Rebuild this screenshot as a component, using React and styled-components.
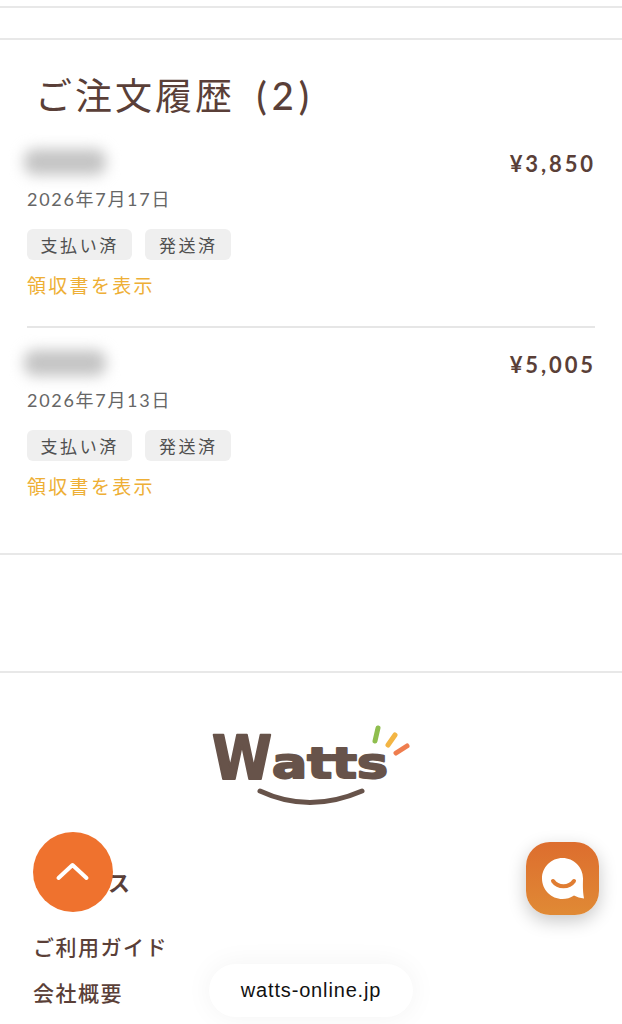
import React from "react";
import styled, { createGlobalStyle } from "styled-components";

const GlobalStyle = createGlobalStyle`
  html, body {
    margin: 0;
    padding: 0;
    background: #fff;
  }
  * {
    box-sizing: border-box;
  }
`;

const Page = styled.div`
  position: relative;
  width: 622px;
  height: 1024px;
  overflow: hidden;
  background: #fff;
  color: #5a3f38;
  font-family: "Lato", "Noto Sans CJK JP", sans-serif;
`;

const TopStrip = styled.div`
  height: 8px;
  border-bottom: 2px solid #e8e8e8;
`;

const OrderSection = styled.section`
  margin-top: 30px;
  height: 517px;
  padding: 0 27px;
  border-top: 2px solid #e8e8e8;
  border-bottom: 2px solid #e8e8e8;
`;

const Title = styled.h2`
  margin: 30px 0 0 8px;
  height: 50px;
  font-size: 37px;
  line-height: 50px;
  font-weight: 400;
  letter-spacing: 3px;
  word-spacing: 9px;
  white-space: nowrap;
`;

const TitleCount = styled.span`
  font-weight: 500;
  font-size: 38px;
  letter-spacing: 5px;
`;

const OrderList = styled.div`
  display: flex;
  flex-direction: column;
  gap: 15px;
  margin-top: 22px;
`;

const Order = styled.div`
  height: 186px;
  padding-top: 1px;
  border-bottom: ${(p) => (p.$last ? "none" : "2px solid #e6e6e6")};
`;

const OrderHead = styled.div`
  display: flex;
  justify-content: space-between;
  align-items: flex-start;
  height: 36px;
`;

const BlurName = styled.div`
  width: 82px;
  height: 26px;
  margin: 6px 0 0 -3px;
  background: #c4c4c4;
  border-radius: 10px;
  filter: blur(7px);
`;

const Price = styled.div`
  font-family: "Lato", sans-serif;
  font-size: 22px;
  line-height: 30px;
  font-weight: 700;
  letter-spacing: 2.9px;
  margin: 6px -1px 0 0;
`;

const OrderDate = styled.div`
  margin-top: 8px;
  font-size: 18px;
  line-height: 24px;
  font-weight: 400;
  letter-spacing: 1.7px;
  color: #666;
`;

const Badges = styled.div`
  display: flex;
  gap: 13px;
  margin-top: 18px;
`;

const Badge = styled.span`
  display: flex;
  align-items: center;
  justify-content: center;
  height: 31px;
  padding: 0 13.5px;
  border-radius: 6px;
  background: #efefef;
  color: #4f4f4f;
  font-size: 17px;
  font-weight: 400;
  letter-spacing: 2.6px;
`;

const ReceiptLink = styled.a`
  display: block;
  margin-top: 13px;
  color: #eeaf36;
  font-size: 19px;
  line-height: 26px;
  font-weight: 400;
  letter-spacing: 2.3px;
`;

const Footer = styled.footer`
  margin-top: 116px;
  border-top: 2px solid #e8e8e8;
  padding: 51px 33px 0;
`;

const Logo = styled.svg`
  display: block;
  width: 204px;
  height: 86px;
  margin: 0 0 0 176px;
  overflow: visible;
`;

const FooterHeading = styled.div`
  margin-top: 57px;
  font-size: 22px;
  line-height: 32px;
  font-weight: 700;
  letter-spacing: 3px;
`;

const FooterLink = styled.a`
  display: block;
  font-size: 21px;
  line-height: 30px;
  font-weight: 500;
  letter-spacing: 1.5px;
  margin-top: ${(p) => p.$gap}px;
`;

const ScrollTop = styled.button`
  position: absolute;
  left: 33px;
  top: 832px;
  width: 80px;
  height: 80px;
  padding: 0;
  border: none;
  border-radius: 50%;
  background: #ef722e;
  display: flex;
  align-items: center;
  justify-content: center;
`;

const ChatButton = styled.button`
  position: absolute;
  left: 526px;
  top: 842px;
  width: 73px;
  height: 73px;
  padding: 0;
  border: none;
  border-radius: 24px;
  background: linear-gradient(180deg, #dd6d2e 0%, #e08a35 100%);
  box-shadow: 0 6px 18px rgba(0, 0, 0, 0.22);
  display: flex;
  align-items: center;
  justify-content: center;
`;

const UrlPill = styled.div`
  position: absolute;
  left: 209px;
  top: 964px;
  width: 204px;
  height: 53px;
  border-radius: 27px;
  background: #fff;
  box-shadow: 0 0 28px rgba(0, 0, 0, 0.05);
  display: flex;
  align-items: center;
  justify-content: center;
  color: #111;
  font-family: "Liberation Sans", sans-serif;
  font-size: 20px;
  letter-spacing: 0.85px;
`;

function WattsLogo() {
  return (
    <Logo viewBox="0 0 204 86">
      <g
        fill="#67534a"
        stroke="#67534a"
        strokeWidth="2"
        strokeLinejoin="round"
        fontFamily="'DejaVu Sans', sans-serif"
        fontWeight="700"
      >
        <text x="3" y="55" fontSize="60" textLength="60" lengthAdjust="spacingAndGlyphs">
          W
        </text>
        <text x="63" y="54" fontSize="42" textLength="116" lengthAdjust="spacingAndGlyphs">
          atts
        </text>
      </g>
      <path d="M51 67 Q100 90 153 67" fill="none" stroke="#67534a" strokeWidth="5" strokeLinecap="round" />
      <path d="M169 4 L166 17" stroke="#8fbe4e" strokeWidth="5" strokeLinecap="round" />
      <path d="M186 11 L179 21" stroke="#f3b544" strokeWidth="5" strokeLinecap="round" />
      <path d="M198 22 L187 29" stroke="#ef7d4e" strokeWidth="5" strokeLinecap="round" />
    </Logo>
  );
}

const orders = [
  { price: "¥3,850", date: "2026年7月17日" },
  { price: "¥5,005", date: "2026年7月13日" },
];

export default function App() {
  return (
    <Page>
      <GlobalStyle />
      <TopStrip />
      <OrderSection>
        <Title>
          ご注文履歴 <TitleCount>(2)</TitleCount>
        </Title>
        <OrderList>
          {orders.map((order, i) => (
            <Order key={order.date} $last={i === orders.length - 1}>
              <OrderHead>
                <BlurName />
                <Price>{order.price}</Price>
              </OrderHead>
              <OrderDate>{order.date}</OrderDate>
              <Badges>
                <Badge>支払い済</Badge>
                <Badge>発送済</Badge>
              </Badges>
              <ReceiptLink>領収書を表示</ReceiptLink>
            </Order>
          ))}
        </OrderList>
      </OrderSection>
      <Footer>
        <WattsLogo />
        <FooterHeading>サービス</FooterHeading>
        <FooterLink $gap={33}>ご利用ガイド</FooterLink>
        <FooterLink $gap={16}>会社概要</FooterLink>
      </Footer>
      <ScrollTop>
        <svg width="36" height="22" viewBox="0 0 36 22" fill="none">
          <path d="M3.5 17 L17.5 4 L31.5 17" stroke="#fff" strokeWidth="4" strokeLinecap="round" strokeLinejoin="round" />
        </svg>
      </ScrollTop>
      <ChatButton>
        <svg width="44" height="44" viewBox="0 0 44 44">
          <path d="M21.5 1 C32.8 1 42 10.2 42 21.5 C42 27 41.5 32 43 41.5 C39 41 36 40 33 38.5 C29.5 41 25.5 42 21.5 42 C10.2 42 1 32.8 1 21.5 C1 10.2 10.2 1 21.5 1 Z" fill="#fff" />
          <path d="M12 24 C17 31 28 31 33 24" fill="none" stroke="#e07d32" strokeWidth="4" strokeLinecap="round" />
        </svg>
      </ChatButton>
      <UrlPill>watts-online.jp</UrlPill>
    </Page>
  );
}
